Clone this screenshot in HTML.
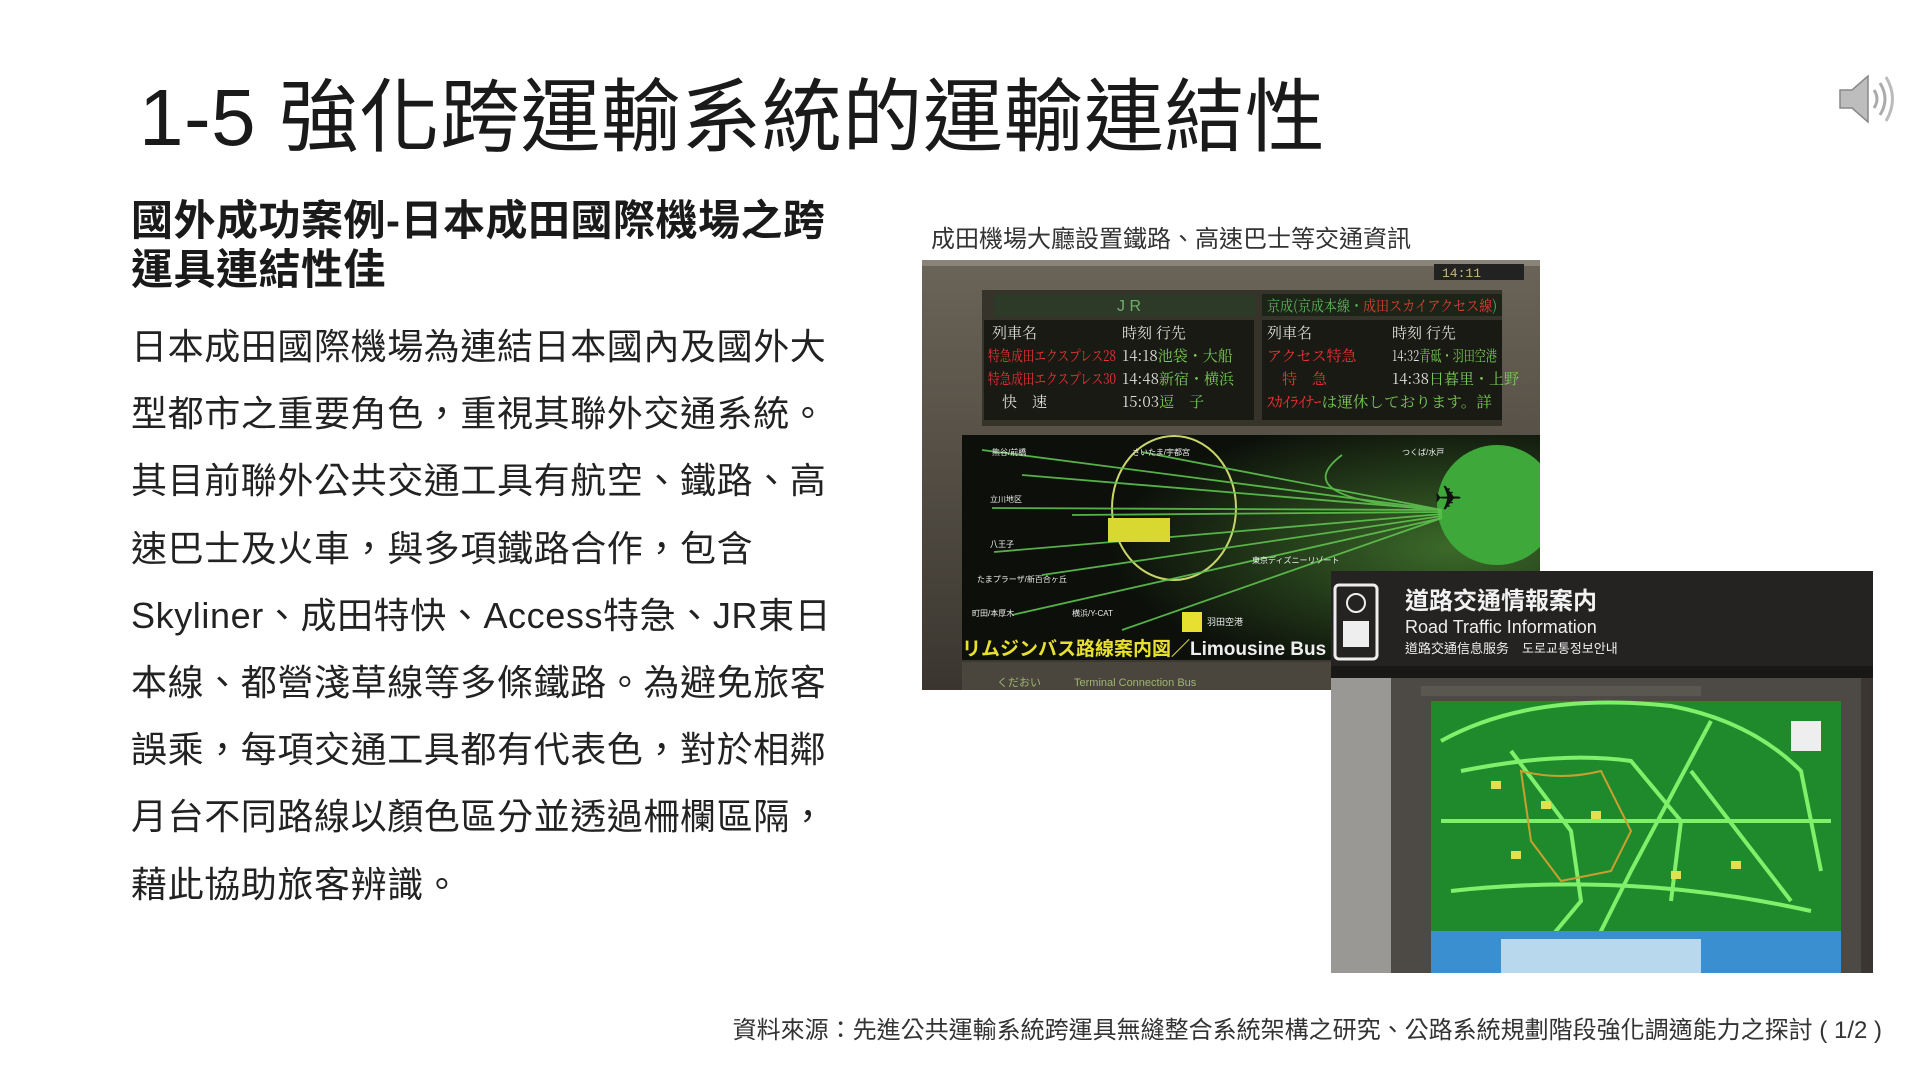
<!DOCTYPE html>
<html><head><meta charset="utf-8"><style>
*{margin:0;padding:0;box-sizing:border-box}
body{width:1920px;height:1080px;background:#fff;position:relative;overflow:hidden;font-family:"Liberation Sans","Noto Sans CJK TC",sans-serif;color:#1e1e1e}
.t{position:absolute;white-space:nowrap}
#title{left:139px;top:68px;font-size:80px;line-height:100px;font-weight:400;color:#1a1a1a;letter-spacing:0.5px}
#sub{left:131px;top:196px;font-size:42px;line-height:49px;font-weight:700;color:#1a1a1a;letter-spacing:0.5px}
#body{left:131px;top:313px;font-size:36px;line-height:67.2px;color:#222;letter-spacing:0.6px}
#cap{left:931px;top:225px;font-size:24px;line-height:30px;color:#333}
#foot{right:38px;top:1016px;font-size:24px;line-height:30px;color:#333}
svg{position:absolute}
</style></head><body>
<div class="t" id="title">1-5 強化跨運輸系統的運輸連結性</div>
<div class="t" id="sub">國外成功案例-日本成田國際機場之跨<br>運具連結性佳</div>
<div class="t" id="body">日本成田國際機場為連結日本國內及國外大<br>型都市之重要角色，重視其聯外交通系統。<br>其目前聯外公共交通工具有航空、鐵路、高<br>速巴士及火車，與多項鐵路合作，包含<br>Skyliner、成田特快、Access特急、JR東日<br>本線、都營淺草線等多條鐵路。為避免旅客<br>誤乘，每項交通工具都有代表色，對於相鄰<br>月台不同路線以顏色區分並透過柵欄區隔，<br>藉此協助旅客辨識。</div>
<div class="t" id="cap">成田機場大廳設置鐵路、高速巴士等交通資訊</div>
<div class="t" id="foot">資料來源：先進公共運輸系統跨運具無縫整合系統架構之研究、公路系統規劃階段強化調適能力之探討 ( 1/2 )</div>

<svg style="left:1836px;top:70px" width="62" height="58" viewBox="0 0 62 58">
<path d="M4 20 H16 L32 6 V52 L16 38 H4 Z" fill="#bdbdbd" stroke="#888" stroke-width="1.5"/>
<path d="M38 20 Q44 29 38 38" fill="none" stroke="#aaa" stroke-width="3"/>
<path d="M44 13 Q54 29 44 45" fill="none" stroke="#aaa" stroke-width="3"/>
<path d="M50 7 Q63 29 50 51" fill="none" stroke="#bbb" stroke-width="3"/>
</svg>

<svg style="left:922px;top:260px" width="618" height="430" viewBox="0 0 618 430">
<defs><linearGradient id="g1" x1="0" y1="0" x2="0" y2="1"><stop offset="0" stop-color="#6b6458"/><stop offset="1" stop-color="#3a362f"/></linearGradient>
<radialGradient id="gl" cx="0.85" cy="0.5" r="0.6"><stop offset="0" stop-color="#3c6a2a"/><stop offset="1" stop-color="#0c0f0a"/></radialGradient></defs>
<rect width="618" height="430" fill="url(#g1)"/>
<rect x="0" y="0" width="618" height="6" fill="#8a8478"/>
<rect x="512" y="4" width="90" height="16" fill="#222"/><text x="520" y="17" font-size="13" fill="#c9b980" font-family="Liberation Mono">14:11</text>
<rect x="60" y="30" width="520" height="136" fill="#35332a"/>
<rect x="72" y="34" width="262" height="22" fill="#2d3a28"/><text x="195" y="51" font-size="16" fill="#6fae6a">J R</text>
<rect x="340" y="34" width="240" height="22" fill="#1c2418"/><text x="345" y="51" font-size="15" fill="#5fb85a" font-family="Noto Serif CJK SC" textLength="230" lengthAdjust="spacingAndGlyphs">京成(京成本線・<tspan fill="#e04030">成田スカイアクセス線</tspan>)</text>
<g font-size="15" font-family="Noto Serif CJK SC">
<rect x="62" y="60" width="270" height="100" fill="#1a1a14"/><rect x="340" y="60" width="240" height="100" fill="#1a1a14"/>
<text x="70" y="78" fill="#ddd">列車名</text><text x="200" y="78" fill="#ddd">時刻 行先</text>
<text x="345" y="78" fill="#ddd">列車名</text><text x="470" y="78" fill="#ddd">時刻 行先</text>
<text x="66" y="101" fill="#e33" textLength="128" lengthAdjust="spacingAndGlyphs">特急成田エクスプレス28</text><text x="200" y="101" fill="#ddd">14:18<tspan fill="#7c5">池袋・大船</tspan></text>
<text x="66" y="124" fill="#e33" textLength="128" lengthAdjust="spacingAndGlyphs">特急成田エクスプレス30</text><text x="200" y="124" fill="#ddd">14:48<tspan fill="#7c5">新宿・横浜</tspan></text>
<text x="80" y="147" fill="#ddd">快　速</text><text x="200" y="147" fill="#ddd">15:03<tspan fill="#7c5">逗　子</tspan></text>
<text x="345" y="101" fill="#e33">アクセス特急</text><text x="470" y="101" fill="#ddd" textLength="105" lengthAdjust="spacingAndGlyphs">14:32<tspan fill="#7c5">青砥・羽田空港</tspan></text>
<text x="360" y="124" fill="#e33">特　急</text><text x="470" y="124" fill="#ddd">14:38<tspan fill="#7c5">日暮里・上野</tspan></text>
<text x="345" y="147" fill="#e33" textLength="225" lengthAdjust="spacingAndGlyphs">ｽｶｲﾗｲﾅｰ<tspan fill="#7c5">は運休しております。詳</tspan></text>
</g>
<rect x="40" y="175" width="580" height="225" fill="url(#gl)"/>
<circle cx="575" cy="245" r="60" fill="#3fa83a"/>
<ellipse cx="252" cy="248" rx="62" ry="72" fill="none" stroke="#c9d56a" stroke-width="2"/>
<g stroke="#5fc24f" stroke-width="1.8" fill="none" opacity="0.9">
<path d="M60 190 L520 250"/><path d="M220 192 L520 250"/><path d="M100 215 L520 250"/><path d="M70 248 L520 250"/><path d="M150 255 L520 252"/><path d="M72 292 L520 254"/><path d="M120 315 L520 256"/><path d="M90 355 L520 258"/><path d="M200 370 L520 258"/><path d="M420 195 Q360 240 520 250"/>
</g>
<text x="512" y="250" font-size="34" fill="#111">✈</text>
<rect x="186" y="258" width="62" height="24" fill="#d8d830"/>
<g font-size="8" fill="#eee"><text x="70" y="195">熊谷/前橋</text><text x="210" y="195">さいたま/宇都宮</text><text x="480" y="195">つくば/水戸</text><text x="68" y="242">立川地区</text><text x="68" y="287">八王子</text><text x="55" y="322">たまプラーザ/新百合ヶ丘</text><text x="50" y="356">町田/本厚木</text><text x="150" y="356">横浜/Y-CAT</text><text x="330" y="303">東京ディズニーリゾート</text></g>
<rect x="260" y="352" width="20" height="20" fill="#e8e030"/><text x="285" y="365" font-size="9" fill="#eee">羽田空港</text>
<text x="40" y="395" font-size="19" font-weight="700" fill="#e8e030">リムジンバス路線案内図／<tspan fill="#eee">Limousine Bus</tspan></text>
<rect x="40" y="402" width="578" height="28" fill="#4a463e"/>
<text x="75" y="426" font-size="11" fill="#9fb570">くだおい　　　Terminal Connection Bus</text>
</svg>

<svg style="left:1331px;top:571px" width="542" height="402" viewBox="0 0 542 402">
<defs><linearGradient id="g2" x1="0" y1="0" x2="1" y2="0"><stop offset="0" stop-color="#555"/><stop offset="1" stop-color="#3a3530"/></linearGradient></defs>
<rect width="542" height="402" fill="url(#g2)"/>
<rect width="542" height="95" fill="#252321"/>
<rect x="4" y="14" width="42" height="74" rx="4" fill="none" stroke="#eee" stroke-width="3"/>
<circle cx="25" cy="32" r="9" fill="none" stroke="#eee" stroke-width="2"/><rect x="12" y="50" width="26" height="26" fill="#eee"/>
<text x="74" y="38" font-size="24" font-weight="700" fill="#f2f2f2" font-family="Noto Sans CJK TC">道路交通情報案内</text>
<text x="74" y="62" font-size="18" fill="#eee">Road Traffic Information</text>
<text x="74" y="82" font-size="13" fill="#eee" font-family="Noto Sans CJK TC">道路交通信息服务　도로교통정보안내</text>
<rect x="0" y="95" width="542" height="12" fill="#1a1816"/>
<rect x="0" y="107" width="60" height="295" fill="#9a9894"/>
<rect x="60" y="107" width="470" height="295" fill="#4d4a45"/>
<rect x="90" y="115" width="280" height="10" fill="#5a5650"/>
<rect x="100" y="130" width="410" height="272" fill="#1f8a2c"/>
<g stroke="#7ef06a" stroke-width="4" fill="none">
<path d="M110 170 Q200 120 340 135 Q420 150 470 200 L490 300"/>
<path d="M130 200 Q230 180 300 190 L350 250 L340 330"/>
<path d="M180 180 L240 260 L250 330 L200 390"/>
<path d="M380 150 L300 300 L260 380"/><path d="M360 200 L460 330"/>
<path d="M110 250 L500 250"/><path d="M120 320 Q300 300 480 340"/>
</g>
<g stroke="#c9a030" stroke-width="2" fill="none"><path d="M190 200 Q230 210 270 200 L300 260 L280 300 L230 310 L200 270 Z"/></g>
<g fill="#e0e050"><rect x="160" y="210" width="10" height="8"/><rect x="210" y="230" width="10" height="8"/><rect x="260" y="240" width="10" height="8"/><rect x="180" y="280" width="10" height="8"/><rect x="340" y="300" width="10" height="8"/><rect x="400" y="290" width="10" height="8"/></g>
<rect x="100" y="360" width="410" height="42" fill="#3a8fd0"/>
<rect x="170" y="368" width="200" height="34" fill="#b8d8ee"/>
<rect x="460" y="150" width="30" height="30" fill="#eee"/>
</svg>
</body></html>
